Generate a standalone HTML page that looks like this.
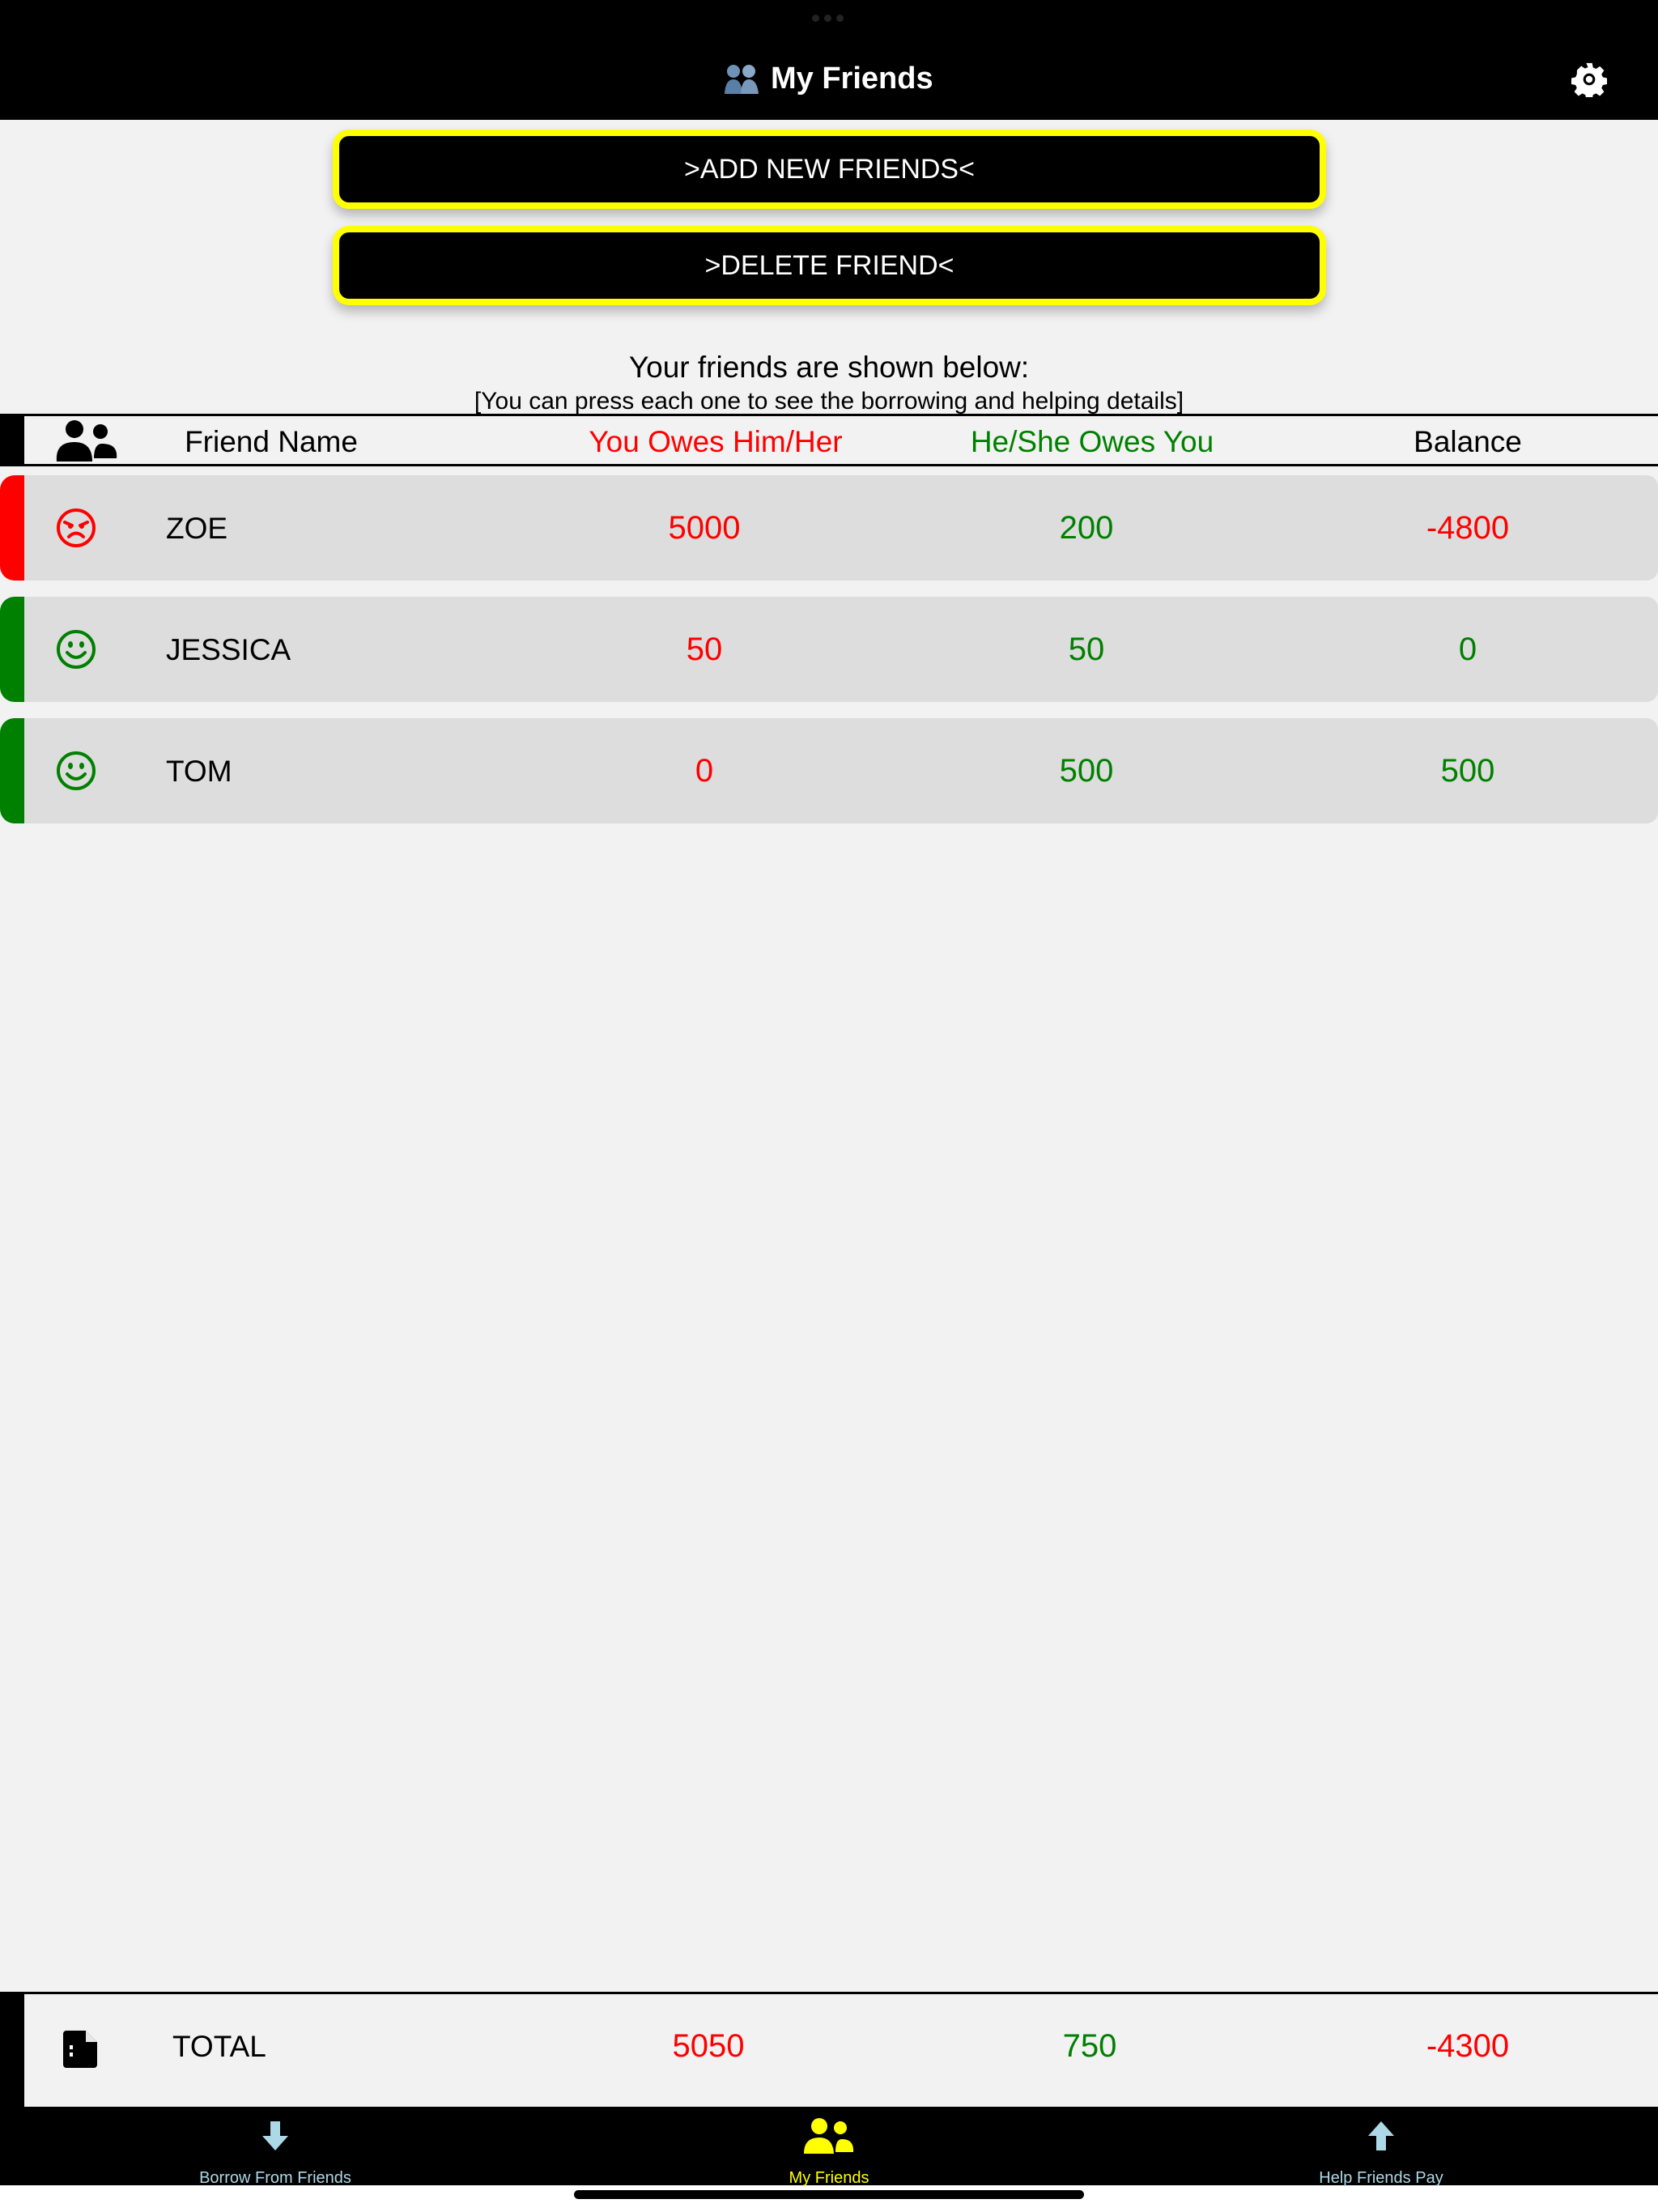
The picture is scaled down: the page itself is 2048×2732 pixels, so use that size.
<!DOCTYPE html>
<html><head><meta charset="utf-8">
<style>
*{margin:0;padding:0;box-sizing:border-box}
body{width:2048px;height:2732px;background:#f2f2f2;font-family:"Liberation Sans",sans-serif;position:relative;overflow:hidden}
.abs{position:absolute}
.hdr{left:0;top:0;width:2048px;height:148px;background:#000}
.btn{left:411px;width:1227px;height:98px;background:#000;border:8px solid #ff0;border-radius:20px;color:#fff;font-size:34px;display:flex;align-items:center;justify-content:center;box-shadow:0 8px 14px rgba(0,0,0,.25)}
.c{transform:translateX(-50%);white-space:nowrap}
.row{left:0;width:2048px;height:130px;background:#dddddd;border-radius:18px 14px 14px 18px;overflow:hidden}
.bar{left:0;top:0;width:30px;height:100%}
.t{font-size:37px;line-height:37px}
.v{font-size:40px;line-height:37px}
.red{color:#f00}.grn{color:#008000}
</style></head><body>
<div class="abs hdr"></div>
<div class="abs" style="left:1003px;top:18px;width:42px;height:10px;display:flex;gap:6px"><span style="width:9px;height:9px;border-radius:50%;background:#222"></span><span style="width:9px;height:9px;border-radius:50%;background:#222"></span><span style="width:9px;height:9px;border-radius:50%;background:#222"></span></div>
<svg class="abs" style="left:894px;top:78px" width="44" height="38" viewBox="0 0 44 38"><circle cx="12" cy="10" r="8" fill="#6f93b8"/><circle cx="31" cy="10" r="8" fill="#8aa9c8"/><path d="M1 38 Q2 20 12 20 Q22 20 23 38Z" fill="#5a7fa6"/><path d="M21 38 Q22 20 31 20 Q41 20 43 38Z" fill="#7898bb"/></svg>
<div class="abs" style="left:952px;top:76px;color:#fff;font-size:38px;font-weight:bold">My Friends</div>
<svg class="abs" style="left:1941px;top:76px" width="44" height="44" viewBox="0 0 24 24"><path fill="#fff" d="M10 1h4l.6 3 2 .9 2.6-1.7 2.8 2.8-1.7 2.6.9 2 3 .6v4l-3 .6-.9 2 1.7 2.6-2.8 2.8-2.6-1.7-2 .9-.6 3h-4l-.6-3-2-.9-2.6 1.7-2.8-2.8 1.7-2.6-.9-2-3-.6v-4l3-.6.9-2L3.8 5.8l2.8-2.8 2.6 1.7 2-.9z"/><circle cx="12" cy="12" r="4" fill="#000"/><circle cx="12" cy="12" r="2.3" fill="#fff"/></svg>

<div class="abs btn" style="top:160px">&gt;ADD NEW FRIENDS&lt;</div>
<div class="abs btn" style="top:279px">&gt;DELETE FRIEND&lt;</div>

<div class="abs c" style="left:1024px;top:433px;font-size:37px">Your friends are shown below:</div>
<div class="abs c" style="left:1024px;top:479px;font-size:30px">[You can press each one to see the borrowing and helping details]</div>

<div class="abs" style="left:0;top:511px;width:2048px;height:3px;background:#000"></div>
<div class="abs" style="left:0;top:573px;width:2048px;height:3px;background:#000"></div>
<div class="abs" style="left:0;top:511px;width:30px;height:65px;background:#000"></div>
<svg class="abs" style="left:68px;top:518px" width="78" height="54" viewBox="0 0 78 54"><circle cx="24" cy="12" r="11" fill="#000"/><circle cx="56" cy="15" r="9" fill="#000"/><path d="M2 52 Q0 28 24 28 Q46 28 46 52Z" fill="#000"/><path d="M48 48 Q48 30 58 30 Q78 30 76 48Z" fill="#000"/></svg>
<div class="abs t c" style="left:335px;top:527px">Friend Name</div>
<div class="abs t c red" style="left:884px;top:527px">You Owes Him/Her</div>
<div class="abs t c grn" style="left:1349px;top:527px">He/She Owes You</div>
<div class="abs t c" style="left:1813px;top:527px">Balance</div>

<div class="abs row" style="top:587px"><div class="abs bar" style="background:#f00"></div>
<svg class="abs" style="left:68px;top:39px" width="52" height="52" viewBox="0 0 52 52"><circle cx="26" cy="26" r="22" fill="none" stroke="#f00" stroke-width="4"/><path d="M12 19l9 4M40 19l-9 4" stroke="#f00" stroke-width="4" stroke-linecap="round"/><circle cx="19" cy="24" r="3" fill="#f00"/><circle cx="33" cy="24" r="3" fill="#f00"/><path d="M17 37 Q26 28 35 37" fill="none" stroke="#f00" stroke-width="4" stroke-linecap="round"/></svg>
<div class="abs t" style="left:205px;top:47px">ZOE</div>
<div class="abs v c red" style="left:870px;top:47px">5000</div>
<div class="abs v c grn" style="left:1342px;top:47px">200</div>
<div class="abs v c red" style="left:1813px;top:47px">-4800</div></div>

<div class="abs row" style="top:737px"><div class="abs bar" style="background:#008000"></div>
<svg class="abs" style="left:68px;top:39px" width="52" height="52" viewBox="0 0 52 52"><circle cx="26" cy="26" r="22" fill="none" stroke="#008000" stroke-width="4"/><ellipse cx="19" cy="20" rx="3" ry="4" fill="#008000"/><ellipse cx="33" cy="20" rx="3" ry="4" fill="#008000"/><path d="M15 30 Q26 42 37 30" fill="none" stroke="#008000" stroke-width="4" stroke-linecap="round"/></svg>
<div class="abs t" style="left:205px;top:47px">JESSICA</div>
<div class="abs v c red" style="left:870px;top:47px">50</div>
<div class="abs v c grn" style="left:1342px;top:47px">50</div>
<div class="abs v c grn" style="left:1813px;top:47px">0</div></div>

<div class="abs row" style="top:887px"><div class="abs bar" style="background:#008000"></div>
<svg class="abs" style="left:68px;top:39px" width="52" height="52" viewBox="0 0 52 52"><circle cx="26" cy="26" r="22" fill="none" stroke="#008000" stroke-width="4"/><ellipse cx="19" cy="20" rx="3" ry="4" fill="#008000"/><ellipse cx="33" cy="20" rx="3" ry="4" fill="#008000"/><path d="M15 30 Q26 42 37 30" fill="none" stroke="#008000" stroke-width="4" stroke-linecap="round"/></svg>
<div class="abs t" style="left:205px;top:47px">TOM</div>
<div class="abs v c red" style="left:870px;top:47px">0</div>
<div class="abs v c grn" style="left:1342px;top:47px">500</div>
<div class="abs v c grn" style="left:1813px;top:47px">500</div></div>

<div class="abs" style="left:0;top:2460px;width:2048px;height:3px;background:#000"></div>
<div class="abs" style="left:0;top:2460px;width:30px;height:142px;background:#000"></div>
<svg class="abs" style="left:78px;top:2508px" width="44" height="46" viewBox="0 0 44 46"><path d="M4 0h24l14 14v28a4 4 0 0 1-4 4H4a4 4 0 0 1-4-4V4a4 4 0 0 1 4-4z" fill="#000"/><path d="M28 0v14h14" fill="#fff" opacity=".9"/><rect x="8" y="18" width="4" height="5" fill="#fff"/><rect x="8" y="27" width="4" height="5" fill="#fff"/></svg>
<div class="abs t" style="left:213px;top:2509px">TOTAL</div>
<div class="abs v c red" style="left:875px;top:2509px">5050</div>
<div class="abs v c grn" style="left:1346px;top:2509px">750</div>
<div class="abs v c red" style="left:1813px;top:2509px">-4300</div>

<div class="abs" style="left:0;top:2602px;width:2048px;height:97px;background:#000"></div>
<div class="abs" style="left:0;top:2699px;width:2048px;height:33px;background:#fff"></div>
<div class="abs" style="left:709px;top:2705px;width:630px;height:11px;border-radius:6px;background:#000"></div>
<svg class="abs" style="left:322px;top:2620px" width="36" height="36" viewBox="0 0 36 36"><rect x="12" y="0" width="12" height="20" fill="#add8e6"/><path d="M2 18h32L18 36z" fill="#add8e6"/></svg>
<svg class="abs" style="left:993px;top:2616px" width="62" height="44" viewBox="0 0 62 44"><circle cx="19" cy="10" r="10" fill="#ff0"/><circle cx="45" cy="12" r="8" fill="#ff0"/><path d="M0 44 Q0 24 19 24 Q36 24 37 44Z" fill="#ff0"/><path d="M39 42 Q39 26 47 26 Q62 26 61 42Z" fill="#ff0"/></svg>
<svg class="abs" style="left:1688px;top:2620px" width="36" height="36" viewBox="0 0 36 36"><rect x="12" y="16" width="12" height="20" fill="#add8e6"/><path d="M2 18h32L18 0z" fill="#add8e6"/></svg>
<div class="abs c" style="left:340px;top:2679px;font-size:20px;color:#add8e6">Borrow From Friends</div>
<div class="abs c" style="left:1024px;top:2679px;font-size:20px;color:#ff0">My Friends</div>
<div class="abs c" style="left:1706px;top:2679px;font-size:20px;color:#add8e6">Help Friends Pay</div>
</body></html>
